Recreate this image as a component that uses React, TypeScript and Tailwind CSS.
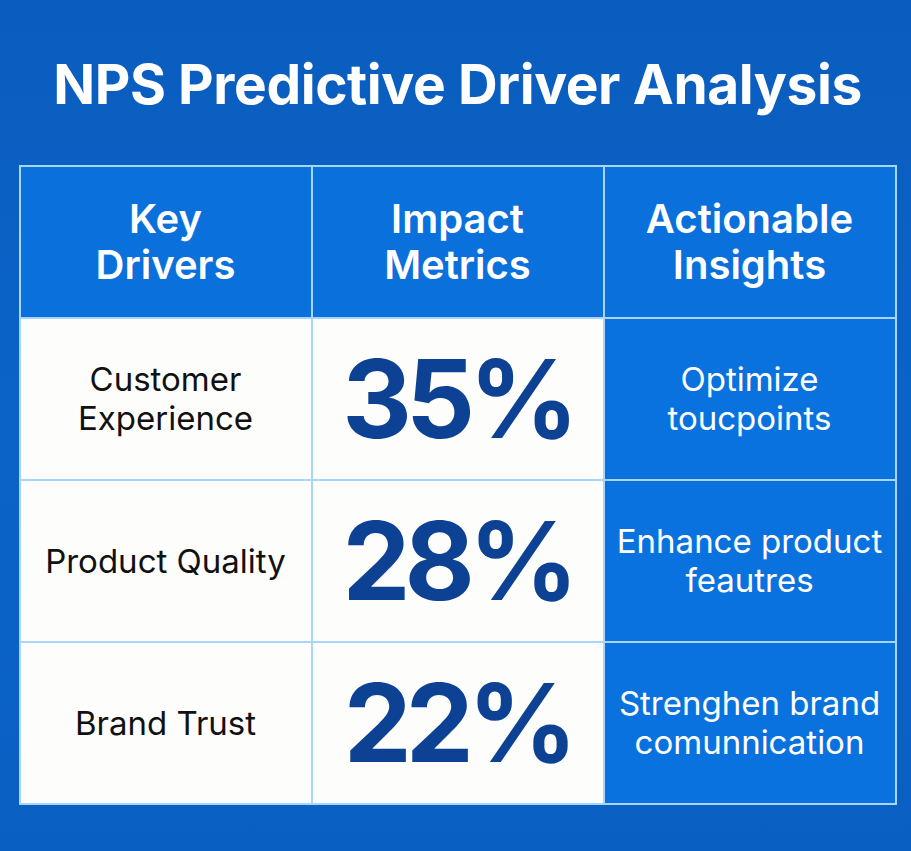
const rows = [
  { driver: ["Customer", "Experience"], pct: "35%", insight: ["Optimize", "toucpoints"] },
  { driver: ["Product Quality"], pct: "28%", insight: ["Enhance product", "feautres"] },
  { driver: ["Brand Trust"], pct: "22%", insight: ["Strenghen brand", "comunnication"] },
];

const headers = [
  ["Key", "Drivers"],
  ["Impact", "Metrics"],
  ["Actionable", "Insights"],
];

export default function App() {
  return (
    <div
      className="w-[911px] h-[851px] bg-gradient-to-b from-[#0a5dbe] via-[#0b63c8] to-[#0a5fc2] flex flex-col items-center"
      style={{ fontFamily: "Inter, 'Noto Sans', sans-serif" }}
    >
      <h1 className="mt-[51px] ml-[4px] text-[55px] leading-[66px] font-bold text-white tracking-[-0.4px]">
        NPS Predictive Driver Analysis
      </h1>
      <div className="mt-[48px] ml-[4px] border-2 border-[#a8d5fb] bg-[#a8d5fb] grid grid-cols-[290px_290px_290px] grid-rows-[150px_160px_160px_160px] gap-[2px]">
        {headers.map((h, i) => (
          <div
            key={i}
            className="bg-[#0a70dc] flex flex-col items-center justify-center text-white font-semibold text-[40px] leading-[46px]"
          >
            {h.map((l) => (
              <span key={l}>{l}</span>
            ))}
          </div>
        ))}
        {rows.map((r) => (
          <>
            <div
              key={r.pct + "a"}
              className="bg-[#fdfdfb] flex flex-col items-center justify-center text-[#111] text-[33px] leading-[39px]"
            >
              {r.driver.map((l) => (
                <span key={l}>{l}</span>
              ))}
            </div>
            <div
              key={r.pct + "b"}
              className="bg-[#fdfdfb] flex items-center justify-center text-[#0d4193] font-bold text-[108px] leading-none tracking-[-6px]"
            >
              <span>{r.pct}</span>
            </div>
            <div
              key={r.pct + "c"}
              className="bg-[#0a72de] flex flex-col items-center justify-center text-white text-[33px] leading-[39px]"
            >
              {r.insight.map((l) => (
                <span key={l}>{l}</span>
              ))}
            </div>
          </>
        ))}
      </div>
    </div>
  );
}
